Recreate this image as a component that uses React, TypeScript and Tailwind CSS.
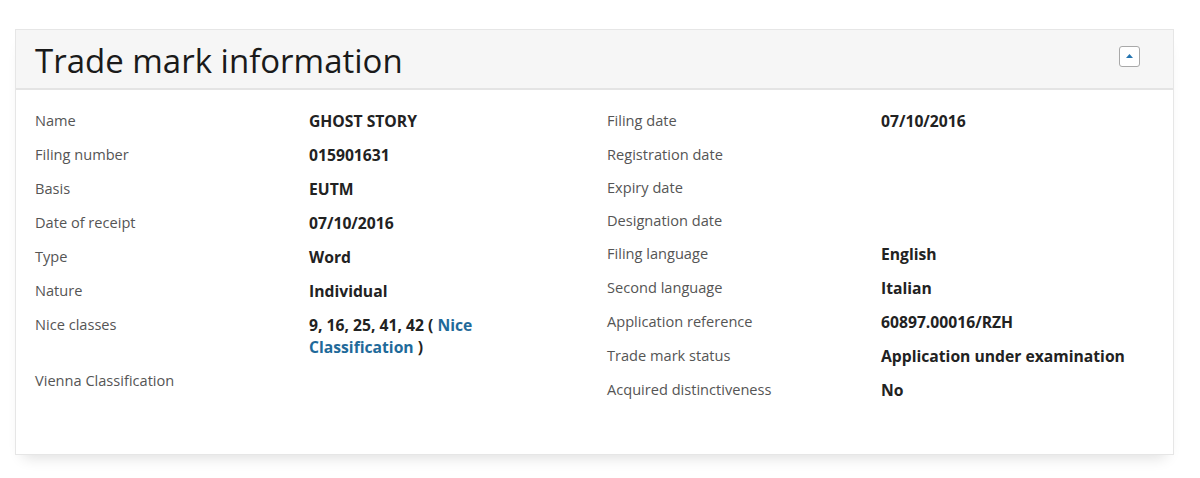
import type { ReactNode } from 'react';

type Row = { label: string; value?: ReactNode };

const leftRows: Row[] = [
    { label: 'Name', value: 'GHOST STORY' },
    { label: 'Filing number', value: '015901631' },
    { label: 'Basis', value: 'EUTM' },
    { label: 'Date of receipt', value: '07/10/2016' },
    { label: 'Type', value: 'Word' },
    { label: 'Nature', value: 'Individual' },
    {
        label: 'Nice classes',
        value: (
            <>
                <div>
                    9, 16, 25, 41, 42 ({' '}
                    <a href="#" className="text-[#1f6a9a]">
                        Nice
                    </a>
                </div>
                <div>
                    <a href="#" className="text-[#1f6a9a]">
                        Classification
                    </a>{' '}
                    )
                </div>
            </>
        ),
    },
    { label: 'Vienna Classification' },
];

const rightRows: Row[] = [
    { label: 'Filing date', value: '07/10/2016' },
    { label: 'Registration date' },
    { label: 'Expiry date' },
    { label: 'Designation date' },
    { label: 'Filing language', value: 'English' },
    { label: 'Second language', value: 'Italian' },
    { label: 'Application reference', value: '60897.00016/RZH' },
    { label: 'Trade mark status', value: 'Application under examination' },
    { label: 'Acquired distinctiveness', value: 'No' },
];

function InfoRow({ label, value }: Row) {
    return (
        <div className="flex items-start pb-3">
            <div className="w-[274px] shrink-0 text-[14.6px] leading-[21px] text-[#555]">{label}</div>
            <div className="w-[250px] text-[15.7px] font-bold leading-[22px] text-[#222]">{value}</div>
        </div>
    );
}

export default function App() {
    return (
        <div className="min-h-[478px] bg-white pt-[29px] pl-[15px] font-['Open_Sans',sans-serif]">
            <div className="w-[1159px] border border-[#e6e6e6] bg-white shadow-[0_10px_14px_-8px_rgba(0,0,0,0.14)]">
                {/* Header */}
                <div className="flex h-[60px] items-center justify-between border-b-2 border-[#e4e4e4] bg-[#f6f6f6] pl-[19px] pr-[33px]">
                    <h1 className="pt-[2px] text-[33px] leading-none text-[#1a1a1a]">Trade mark information</h1>
                    <button className="mb-[6px] flex h-[21px] w-[21px] items-center justify-center rounded-[3px] border border-[#a9a9a9] bg-white">
                        <svg width="7" height="4" viewBox="0 0 7 4">
                            <path d="M0 4 L3.5 0 L7 4 Z" fill="#2474b0" />
                        </svg>
                    </button>
                </div>

                {/* Body */}
                <div className="flex pt-[20px] pb-[41px] pl-[19px]">
                    <div className="w-[572px]">
                        {leftRows.map((r) => (
                            <InfoRow key={r.label} {...r} />
                        ))}
                    </div>
                    <div>
                        {rightRows.map((r) => (
                            <InfoRow key={r.label} {...r} />
                        ))}
                    </div>
                </div>
            </div>
        </div>
    );
}
